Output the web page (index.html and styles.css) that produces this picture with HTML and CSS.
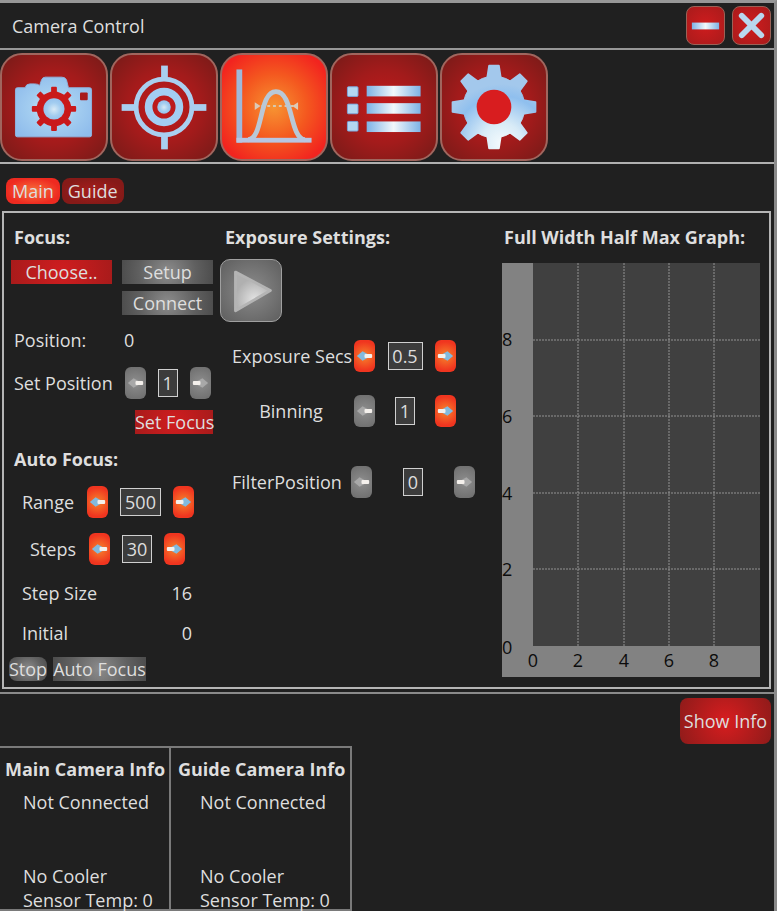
FILE: index.html
```
<!DOCTYPE html>
<html lang="en">
<head>
    <meta charset="UTF-8">
    <meta name="viewport" content="width=device-width, initial-scale=1.0">
    <title>Camera Control</title>
    <link rel="stylesheet" href="styles.css">
</head>
<body>
    <!-- shared gradients and symbols -->
    <svg class="defs" aria-hidden="true">
        <defs>
            <radialGradient id="ice" cx="50%" cy="52%" r="62%">
                <stop offset="0" stop-color="#d8eaf6"/>
                <stop offset="0.5" stop-color="#a3cdf0"/>
                <stop offset="1" stop-color="#8fbcec"/>
            </radialGradient>
            <linearGradient id="iceBar" x1="0" x2="1" y1="0" y2="0">
                <stop offset="0" stop-color="#7db3e6"/>
                <stop offset="0.5" stop-color="#f2f7fb"/>
                <stop offset="1" stop-color="#7db3e6"/>
            </linearGradient>
            <radialGradient id="iceGear" gradientUnits="userSpaceOnUse" cx="62" cy="92" r="62">
                <stop offset="0" stop-color="#f4fafd"/>
                <stop offset="0.35" stop-color="#d8ebf7"/>
                <stop offset="0.8" stop-color="#8fbfee"/>
                <stop offset="1" stop-color="#a3c8ec"/>
            </radialGradient>
            <radialGradient id="gray" cx="55%" cy="72%" r="55%">
                <stop offset="0" stop-color="#e4e4e4"/>
                <stop offset="1" stop-color="#b0b0b0"/>
            </radialGradient>
            <path id="tooth" d="M47 24 L49 11 H59 L61 24 Z" stroke-width="2" stroke-linejoin="round"/>
            <mask id="gearMask">
                <g fill="#fff" stroke="#fff">
                    <circle cx="54" cy="54" r="32"/>
                    <use href="#tooth"/>
                    <use href="#tooth" transform="rotate(45 54 54)"/>
                    <use href="#tooth" transform="rotate(90 54 54)"/>
                    <use href="#tooth" transform="rotate(135 54 54)"/>
                    <use href="#tooth" transform="rotate(180 54 54)"/>
                    <use href="#tooth" transform="rotate(225 54 54)"/>
                    <use href="#tooth" transform="rotate(270 54 54)"/>
                    <use href="#tooth" transform="rotate(315 54 54)"/>
                </g>
                <circle cx="54" cy="54" r="18" fill="#000"/>
            </mask>
            <symbol id="arrow" viewBox="0 0 22 32">
                <path class="head" d="M3 16 L9 11 L14 14 V18 L9 21 Z"/>
                <rect class="shaft" x="11" y="14" width="8" height="4" rx="1"/>
            </symbol>
        </defs>
    </svg>

    <div class="window">
        <header class="titlebar">
            <h1>Camera Control</h1>
            <div class="window-buttons">
                <button class="win-btn" aria-label="Minimize">
                    <svg viewBox="0 0 38 38"><rect x="5" y="16" width="28" height="7" fill="url(#iceBar)"/></svg>
                </button>
                <button class="win-btn" aria-label="Close">
                    <svg viewBox="0 0 38 38"><path d="M9 9 L29 29 M29 9 L9 29" stroke="#b9d7ee" stroke-width="6" stroke-linecap="round"/></svg>
                </button>
            </div>
        </header>

        <nav class="toolbar">
            <button class="tool" aria-label="Camera">
                <svg viewBox="0 0 108 108">
                    <path fill="url(#ice)" stroke="#8fb5e0" stroke-width="1" d="M16 34 H24 Q25 30 29 30 H34 Q38 30 39 32 L41 26 Q42 23 45 23 H62 Q66 23 67 26 L69 34 H91 Q93 34 93 36 V83 Q93 85 91 85 H16 Q14 85 14 83 V36 Q14 34 16 34 Z"/>
                    <rect x="81" y="39" width="8" height="8" rx="1" fill="#a81a1c"/>
                    <g fill="#c9191b">
                        <circle cx="54" cy="56" r="18"/>
                        <rect id="st" x="51" y="33" width="6" height="46" rx="1"/>
                        <use href="#st" transform="rotate(45 54 56)"/>
                        <use href="#st" transform="rotate(90 54 56)"/>
                        <use href="#st" transform="rotate(135 54 56)"/>
                    </g>
                    <circle cx="54" cy="56" r="11" fill="url(#ice)"/>
                </svg>
            </button>
            <button class="tool" aria-label="Guiding">
                <svg viewBox="0 0 108 108">
                    <g fill="#a9cff0">
                        <rect x="51" y="11" width="7" height="15"/>
                        <rect x="51" y="82" width="7" height="16"/>
                        <rect x="10" y="51" width="15" height="7"/>
                        <rect x="83" y="51" width="15" height="7"/>
                    </g>
                    <circle cx="54" cy="54" r="29" fill="none" stroke="#a9cff0" stroke-width="5"/>
                    <circle cx="54" cy="54" r="16" fill="none" stroke="#a3cdf2" stroke-width="8"/>
                    <circle cx="54" cy="54" r="7" fill="url(#ice)"/>
                </svg>
            </button>
            <button class="tool active" aria-label="Focus">
                <svg viewBox="0 0 108 108">
                    <path d="M35 53 H74" stroke="#d8c8b0" stroke-width="2" stroke-dasharray="3 3"/>
                    <path d="M34 49 V57 L40 53 Z M79 49 V57 L73 53 Z" fill="#dccab8"/>
                    <path d="M27 88 C43 88 38 38 56 38 C74 38 70 86 86 88" fill="none" stroke="#b9c8d6" stroke-width="5"/>
                    <rect x="15" y="15" width="6" height="76" fill="#9fb9da"/>
                    <rect x="15" y="86" width="78" height="5" fill="#b7c6e2"/>
                </svg>
            </button>
            <button class="tool" aria-label="Sequence">
                <svg viewBox="0 0 108 108">
                    <g fill="#b3d7f2" stroke="#7aa5dc" stroke-width="1">
                        <rect x="16" y="33" width="11" height="10" rx="1"/>
                        <rect x="16" y="51" width="11" height="10" rx="1"/>
                        <rect x="16" y="69" width="11" height="10" rx="1"/>
                    </g>
                    <g fill="url(#iceBar)">
                        <rect x="36" y="32" width="56" height="11"/>
                        <rect x="36" y="50" width="56" height="11"/>
                        <rect x="36" y="69" width="56" height="11"/>
                    </g>
                </svg>
            </button>
            <button class="tool" aria-label="Settings">
                <svg viewBox="0 0 108 108">
                    <circle cx="54" cy="54" r="20" fill="#d81d1f"/>
                    <rect width="108" height="108" fill="url(#iceGear)" mask="url(#gearMask)"/>
                </svg>
            </button>
        </nav>

        <main>
            <div class="subtabs">
                <button class="subtab active">Main</button>
                <button class="subtab">Guide</button>
            </div>

            <div class="panel">
                <section class="focus">
                    <h2>Focus:</h2>
                    <div class="device">
                        <button class="flat red">Choose..</button>
                        <button class="flat">Setup</button>
                        <button class="flat connect">Connect</button>
                    </div>
                    <div class="row position">
                        <span>Position:</span>
                        <output>0</output>
                    </div>
                    <div class="row set-position">
                        <label for="setPosition">Set Position</label>
                        <div class="spinner">
                            <button class="step off" aria-label="Decrease"><svg><use href="#arrow"/></svg></button>
                            <input id="setPosition" class="one" type="text" value="1">
                            <button class="step off next" aria-label="Increase"><svg><use href="#arrow"/></svg></button>
                        </div>
                    </div>
                    <button class="flat red set-focus">Set Focus</button>

                    <h2 class="auto-title">Auto Focus:</h2>
                    <div class="row auto-row">
                        <label for="range">Range</label>
                        <div class="spinner">
                            <button class="step" aria-label="Decrease"><svg><use href="#arrow"/></svg></button>
                            <input id="range" class="three" type="text" value="500">
                            <button class="step next" aria-label="Increase"><svg><use href="#arrow"/></svg></button>
                        </div>
                    </div>
                    <div class="row auto-row steps">
                        <label for="steps">Steps</label>
                        <div class="spinner">
                            <button class="step" aria-label="Decrease"><svg><use href="#arrow"/></svg></button>
                            <input id="steps" class="two" type="text" value="30">
                            <button class="step next" aria-label="Increase"><svg><use href="#arrow"/></svg></button>
                        </div>
                    </div>
                    <div class="row value">
                        <span>Step Size</span>
                        <output>16</output>
                    </div>
                    <div class="row value">
                        <span>Initial</span>
                        <output>0</output>
                    </div>
                    <div class="actions">
                        <button class="flat stop">Stop</button>
                        <button class="flat auto">Auto Focus</button>
                    </div>
                </section>

                <section class="exposure">
                    <h2>Exposure Settings:</h2>
                    <button class="play" aria-label="Start exposure">
                        <svg viewBox="0 0 62 62"><path d="M15 12 L51 31 L15 52 Z" fill="url(#gray)" stroke="#b4b4b4" stroke-width="3" stroke-linejoin="round"/></svg>
                    </button>
                    <div class="row field">
                        <label for="exposure">Exposure Secs</label>
                        <div class="spinner">
                            <button class="step" aria-label="Decrease"><svg><use href="#arrow"/></svg></button>
                            <input id="exposure" class="decimal" type="text" value="0.5">
                            <button class="step next" aria-label="Increase"><svg><use href="#arrow"/></svg></button>
                        </div>
                    </div>
                    <div class="row field binning">
                        <label for="binning">Binning</label>
                        <div class="spinner">
                            <button class="step off" aria-label="Decrease"><svg><use href="#arrow"/></svg></button>
                            <input id="binning" class="one" type="text" value="1">
                            <button class="step next" aria-label="Increase"><svg><use href="#arrow"/></svg></button>
                        </div>
                    </div>
                    <div class="row field filter">
                        <label for="filter">FilterPosition</label>
                        <div class="spinner">
                            <button class="step off" aria-label="Decrease"><svg><use href="#arrow"/></svg></button>
                            <input id="filter" class="one" type="text" value="0">
                            <button class="step off next" aria-label="Increase"><svg><use href="#arrow"/></svg></button>
                        </div>
                    </div>
                </section>

                <section class="graph">
                    <h2>Full Width Half Max Graph:</h2>
                    <svg class="chart" viewBox="0 0 258 414">
                        <rect width="258" height="414" fill="#828282"/>
                        <rect x="31" width="227" height="383" fill="#404040"/>
                        <path class="grid" d="M76 0 V383 M122 0 V383 M167 0 V383 M212 0 V383 M31 77 H258 M31 153 H258 M31 230 H258 M31 306 H258"/>
                        <g class="axis">
                            <text x="0" y="83">8</text>
                            <text x="0" y="160">6</text>
                            <text x="0" y="237">4</text>
                            <text x="0" y="313">2</text>
                            <text x="0" y="391">0</text>
                        </g>
                        <g class="axis x">
                            <text x="31" y="404">0</text>
                            <text x="76" y="404">2</text>
                            <text x="122" y="404">4</text>
                            <text x="167" y="404">6</text>
                            <text x="212" y="404">8</text>
                        </g>
                    </svg>
                </section>
            </div>
        </main>

        <footer>
            <button class="show-info">Show Info</button>
            <div class="infos">
                <section class="info">
                    <h2>Main Camera Info</h2>
                    <p>Not Connected</p>
                    <p class="cooler">No Cooler</p>
                    <p>Sensor Temp: 0</p>
                </section>
                <section class="info guide">
                    <h2>Guide Camera Info</h2>
                    <p>Not Connected</p>
                    <p class="cooler">No Cooler</p>
                    <p>Sensor Temp: 0</p>
                </section>
            </div>
        </footer>
    </div>
</body>
</html>
```
FILE: styles.css
```
* {
    box-sizing: border-box;
}

body {
    margin: 0;
    background: #202020;
    color: #dedede;
    font-family: 'Open Sans', 'Noto Sans', sans-serif;
    font-size: 18px;
    line-height: 24px;
}

button, input {
    font: inherit;
    color: inherit;
    padding: 0;
    border: none;
}

button {
    cursor: pointer;
    white-space: nowrap;
}

button svg {
    display: block;
    width: 100%;
    height: 100%;
}

h1, h2, p {
    margin: 0;
    font-size: 18px;
    white-space: nowrap;
}

h1 {
    font-weight: 400;
}

h2 {
    font-weight: 700;
}

.defs {
    position: absolute;
    width: 0;
    height: 0;
}

.window {
    border-top: 3px solid #979797;
    border-right: 3px solid #8a8a8a;
}

/* title bar */
.titlebar {
    display: flex;
    justify-content: space-between;
    align-items: center;
    height: 47px;
    padding: 0 3px 0 12px;
    border-bottom: 2px solid #979797;
}

.window-buttons {
    display: flex;
    gap: 7px;
}

.win-btn {
    width: 39px;
    height: 39px;
    border: 1px solid #9a6257;
    border-radius: 8px;
    background: radial-gradient(circle, #cf1c1e, #a81b1b);
}

/* toolbar */
.toolbar {
    display: flex;
    gap: 2px;
    height: 114px;
    padding: 3px 0;
    border-bottom: 2px solid #b0b0b0;
}

.tool {
    width: 108px;
    height: 108px;
    border: 2px solid #a0665e;
    border-radius: 22px;
    background: radial-gradient(circle, #c41a1c, #a31b1b 50%, #761b18);
}

.tool.active {
    background: radial-gradient(circle, #f79432, #f4581f 45%, #f2241f 85%);
}

/* sub tabs */
main {
    padding: 14px 3px 3px 2px;
    border-bottom: 2px solid #8a8a8a;
}

.subtabs {
    display: flex;
    gap: 2px;
    padding: 0 4px 7px;
}

.subtab {
    height: 26px;
    padding: 0 6px;
    border-radius: 8px;
    background: radial-gradient(closest-side, #a81d1b, #861a18);
}

.subtab.active {
    background: radial-gradient(closest-side, #f8713c, #ee2a20);
}

.panel {
    display: grid;
    grid-template-columns: 216px 282px 1fr;
    padding: 10px 9px 6px 0;
    border: 2px solid #b5b5b5;
}

.panel h2 {
    height: 28px;
    line-height: 28px;
}

.row {
    display: flex;
    align-items: center;
    height: 36px;
    white-space: nowrap;
}

.flat {
    height: 24px;
    background: radial-gradient(circle, #8c8c8c, #606060 60%, #4c4c4c);
}

.flat.red {
    background: radial-gradient(circle, #d01d1f, #a81b1b);
}

/* number spinner */
.spinner {
    display: flex;
    align-items: center;
    gap: 12px;
}

.spinner input {
    height: 28px;
    border: 1px solid #d0d0d0;
    background: #3c3c3c;
    text-align: center;
}

.spinner .one {
    width: 20px;
}

.spinner .two {
    width: 30px;
}

.spinner .three {
    width: 41px;
}

.spinner .decimal {
    width: 35px;
}

.step {
    width: 21px;
    height: 32px;
    border-radius: 6px;
    background: radial-gradient(circle, #f6842c, #f0351f 75%);
    color: #82bade;
}

.step.off {
    background: radial-gradient(circle, #8e8e8e, #6c6c6c);
    color: #a8a8a8;
}

.step.next svg {
    transform: scaleX(-1);
}

.head {
    fill: currentColor;
}

.shaft {
    fill: #f4f0ec;
}

/* focus column */
.focus h2 {
    padding-left: 10px;
}

.device {
    display: grid;
    grid-template-columns: 101px 91px;
    gap: 7px 10px;
    padding: 9px 0 0 7px;
}

.device .connect {
    grid-column: 2;
}

.position {
    display: grid;
    grid-template-columns: 110px 1fr;
    height: 50px;
    padding-left: 10px;
}

.set-position {
    padding-left: 10px;
    gap: 12px;
}

.set-focus {
    display: block;
    width: 78px;
    margin: 9px 0 0 131px;
}

.focus .auto-title {
    height: 50px;
    line-height: 50px;
}

.auto-row {
    gap: 13px;
    padding-left: 18px;
}

.steps {
    margin: 11px 0 6px;
    padding-left: 26px;
}

.value {
    justify-content: space-between;
    height: 40px;
    padding: 0 28px 0 18px;
}

.actions {
    display: flex;
    gap: 6px;
    padding: 4px 0 0 5px;
}

.stop {
    border-radius: 8px;
}

/* exposure column */
.exposure h2 {
    padding-left: 5px;
}

.play {
    display: block;
    width: 62px;
    height: 63px;
    margin: 8px 0 16px;
    border: 1px solid #a0a0a0;
    border-radius: 10px;
    background: radial-gradient(circle, #8c8c8c, #5e5e5e);
}

.field {
    display: grid;
    grid-template-columns: 118px 102px;
    gap: 4px;
    padding-left: 12px;
}

.field label {
    text-align: center;
}

.field .spinner {
    justify-content: space-between;
}

.binning {
    margin: 19px 0 35px;
}

.filter {
    grid-template-columns: 115px 124px;
}

.filter label {
    text-align: left;
}

/* graph */
.graph h2 {
    padding-left: 2px;
}

.chart {
    display: block;
    width: 100%;
    margin-top: 12px;
}

.grid {
    fill: none;
    stroke: #929292;
    stroke-width: 1;
    stroke-dasharray: 2 1;
}

.axis {
    fill: #0c0c0c;
    font-size: 18px;
}

.axis.x {
    text-anchor: middle;
}

/* info */
.show-info {
    display: block;
    width: 91px;
    height: 46px;
    margin: 4px 3px 2px auto;
    border-radius: 8px;
    background: radial-gradient(circle, #d81d1f, #8e1b1a);
}

.infos {
    display: flex;
}

.info {
    width: 171px;
    height: 165px;
    padding: 8px 5px 0;
    border: 2px solid #7a7a7a;
    border-left: none;
}

.info.guide {
    width: 181px;
    padding-left: 7px;
}

.info h2 {
    margin-bottom: 8px;
    line-height: 26px;
}

.info p {
    padding-left: 18px;
}

.guide p {
    padding-left: 22px;
}

.info .cooler {
    margin-top: 50px;
}
```
